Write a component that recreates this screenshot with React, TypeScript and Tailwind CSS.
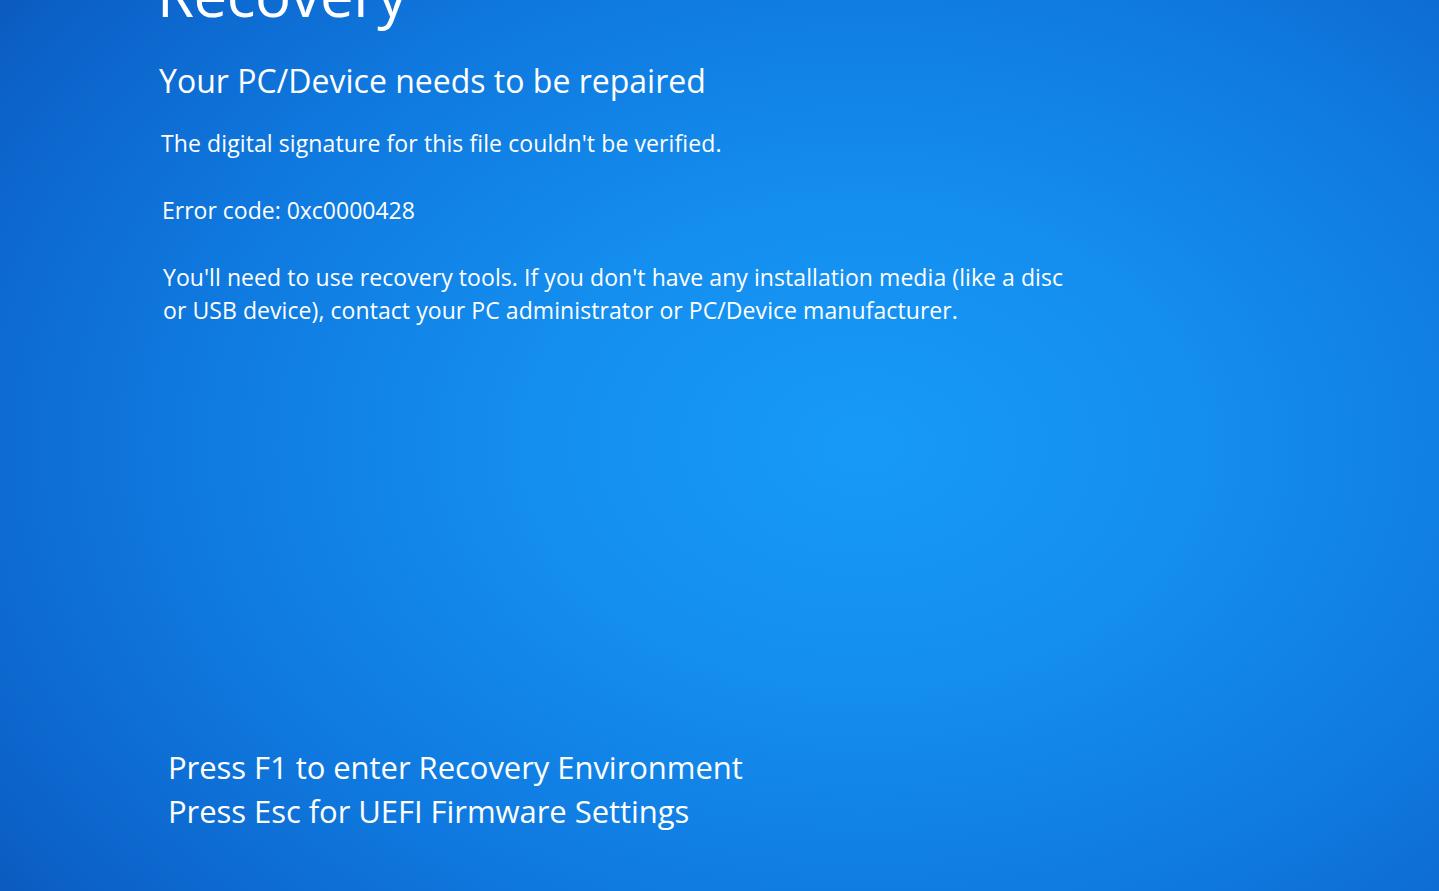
export default function App() {
  return (
    <div
      className="relative min-h-screen h-[891px] w-full overflow-hidden bg-[radial-gradient(ellipse_78%_90%_at_60%_50%,#179af7_0%,#148eef_30%,#0f78de_62%,#0c62c9_88%,#0a55b8_100%)] text-white"
      style={{ fontFamily: '"Open Sans", "Noto Sans", sans-serif' }}
    >
      <div className="flex flex-col pl-[158px]">
        <h1 className="-mt-[42px] -ml-[1px] text-[60px] leading-[72px] font-normal tracking-[-0.5px]">Recovery</h1>

        <h2 className="mt-[31px] pl-[1px] text-[32px] leading-[40px] font-normal">
          Your PC/Device needs to be repaired
        </h2>

        <p className="mt-[27px] pl-[3px] text-[23px] leading-[30px] tracking-[0.1px]">
          The digital signature for this file couldn't be verified.
        </p>

        <p className="mt-[37px] pl-[4px] text-[23px] leading-[30px]">
          Error code: 0xc0000428
        </p>

        <p className="mt-[36px] w-[960px] pl-[5px] text-[23px] leading-[33px] tracking-[0.07px]">
          You'll need to use recovery tools. If you don't have any installation media (like a disc
          <br />
          or USB device), contact your PC administrator or PC/Device manufacturer.
        </p>

        <div className="mt-[418px] pl-[10px] text-[31px] leading-[44px] tracking-[-0.05px]">
          <p>Press F1 to enter Recovery Environment</p>
          <p>Press Esc for UEFI Firmware Settings</p>
        </div>
      </div>
    </div>
  );
}
